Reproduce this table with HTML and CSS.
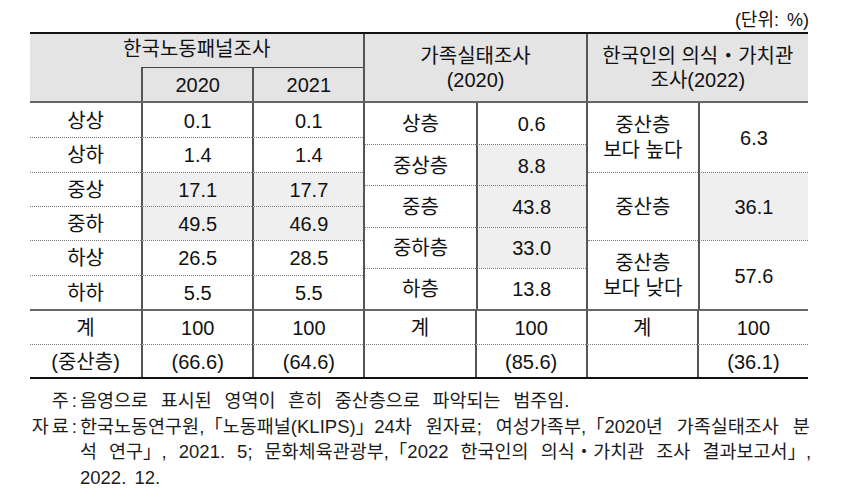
FILE: index.html
```html
<!DOCTYPE html>
<html lang="ko">
<head>
<meta charset="utf-8">
<title>중산층 비중</title>
<link rel="stylesheet" href="styles.css">
</head>
<body>
<div class="page">
  <div class="unit">(단위: %)</div>
  <div class="tbl">
    <div class="c h h-klips">한국노동패널조사</div>
    <div class="c h h-fam vl">가족실태조사<br>(2020)</div>
    <div class="c h h-val vl">한국인의 의식・가치관<br>조사(2022)</div>
    <div class="c h h-blank"></div>
    <div class="c h h-y1 vl ht">2020</div>
    <div class="c h h-y2 vl ht">2021</div>

    <div class="grp g-left">
      <div class="c">상상</div><div class="c vl">0.1</div><div class="c vl">0.1</div>
      <div class="c">상하</div><div class="c vl">1.4</div><div class="c vl">1.4</div>
      <div class="c">중상</div><div class="c vl sh">17.1</div><div class="c vl sh">17.7</div>
      <div class="c">중하</div><div class="c vl sh">49.5</div><div class="c vl sh">46.9</div>
      <div class="c">하상</div><div class="c vl">26.5</div><div class="c vl">28.5</div>
      <div class="c">하하</div><div class="c vl">5.5</div><div class="c vl">5.5</div>
    </div>
    <div class="grp g-mid vl">
      <div class="c">상층</div><div class="c vl">0.6</div>
      <div class="c">중상층</div><div class="c vl sh">8.8</div>
      <div class="c">중층</div><div class="c vl sh">43.8</div>
      <div class="c">중하층</div><div class="c vl sh">33.0</div>
      <div class="c">하층</div><div class="c vl">13.8</div>
    </div>
    <div class="grp g-right vl">
      <div class="c">중산층<br>보다 높다</div><div class="c vl">6.3</div>
      <div class="c">중산층</div><div class="c vl sh">36.1</div>
      <div class="c">중산층<br>보다 낮다</div><div class="c vl">57.6</div>
    </div>

    <div class="c tot">계</div>
    <div class="c tot vl">100</div>
    <div class="c tot vl">100</div>
    <div class="c tot vl">계</div>
    <div class="c tot vl">100</div>
    <div class="c tot vl">계</div>
    <div class="c tot vl">100</div>

    <div class="c mid">(중산층)</div>
    <div class="c mid vl">(66.6)</div>
    <div class="c mid vl">(64.6)</div>
    <div class="c mid vl"></div>
    <div class="c mid vl">(85.6)</div>
    <div class="c mid vl"></div>
    <div class="c mid vl">(36.1)</div>
  </div>

  <div class="notes">
    <div class="lab">주:</div>
    <div class="txt">
      <div class="ln l1">음영으로 표시된 영역이 흔히 중산층으로 파악되는 범주임.</div>
    </div>
    <div class="lab">자료:</div>
    <div class="txt">
      <div class="ln l2">한국노동연구원,「노동패널(KLIPS)」24차 원자료; 여성가족부,「2020년 가족실태조사 분</div>
      <div class="ln l3">석 연구」, 2021. 5; 문화체육관광부,「2022 한국인의 의식・가치관 조사 결과보고서」,</div>
      <div class="ln l4">2022. 12.</div>
    </div>
  </div>
</div>
</body>
</html>
```

FILE: styles.css
```css
* { box-sizing: border-box; }

body {
  margin: 0;
  background: #ffffff;
  color: #111111;
  font-family: "Liberation Sans", "Noto Sans CJK KR", sans-serif;
}

.page {
  width: 778px;
  margin-left: 30px;
}

.unit {
  margin-top: 8px;
  height: 24px;
  line-height: 24px;
  font-size: 18px;
  text-align: right;
  word-spacing: 3px;
  margin-right: -1px;
}

.tbl {
  display: grid;
  grid-template-columns: repeat(7, 1fr);
  grid-template-rows: 33px 34px 208px 35px 33px;
  border-top: 2px solid #111;
  border-bottom: 2px solid #111;
  font-size: 20px;
}

.c {
  display: flex;
  align-items: center;
  justify-content: center;
  text-align: center;
  line-height: 25px;
  padding-top: 2px;
}

.vl { border-left: 2px solid #555; }

.h { background: #e4e4e4; }
.h-klips { grid-column: 1 / 4; grid-row: 1; padding-top: 0; padding-bottom: 2px; }
.h-fam { grid-column: 4 / 6; grid-row: 1 / 3; line-height: 24px; padding-top: 0; }
.h-val { grid-column: 6 / 8; grid-row: 1 / 3; line-height: 24px; padding-top: 0; }
.h-blank { grid-column: 1; grid-row: 2; }
.h-y1 { grid-column: 2; grid-row: 2; }
.h-y2 { grid-column: 3; grid-row: 2; }
.ht { border-top: 1px solid #444; }

.grp {
  display: grid;
  grid-row: 3;
  border-top: 2px solid #666;
}
.g-left { grid-column: 1 / 4; grid-template-columns: repeat(3, 1fr); grid-template-rows: repeat(6, 1fr); }
.g-mid { grid-column: 4 / 6; grid-template-columns: repeat(2, 1fr); grid-template-rows: repeat(5, 1fr); }
.g-right { grid-column: 6 / 8; grid-template-columns: repeat(2, 1fr); grid-template-rows: repeat(3, 1fr); }

.g-left > :nth-child(n+4),
.g-mid > :nth-child(n+3),
.g-right > :nth-child(n+3) {
  border-top: 1px dotted #777;
}

.sh { background: #efefef; }

.tot { grid-row: 4; border-top: 2px solid #666; }
.mid { grid-row: 5; border-top: 1px dotted #777; }

.notes {
  display: grid;
  grid-template-columns: 47px 1fr;
  column-gap: 3px;
  margin-top: 9px;
  font-size: 18.5px;
  line-height: 25.5px;
  color: #1c1c1c;
}

.lab {
  text-align: right;
  letter-spacing: 3px;
  margin-right: -3px;
  white-space: nowrap;
}

.ln { white-space: nowrap; }
.l1 { word-spacing: 7.5px; }
.l2 { word-spacing: 8.8px; }
.l3 { word-spacing: 6.9px; }
.l4 { word-spacing: 3px; }
```
